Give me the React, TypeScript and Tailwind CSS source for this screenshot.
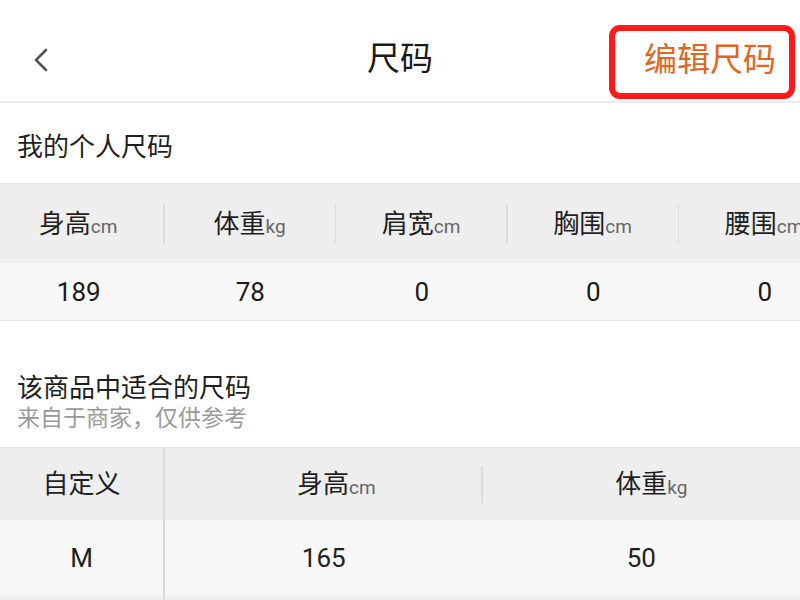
import React from "react";

const font = { fontFamily: 'Roboto, "Noto Sans CJK SC", "Noto Sans", sans-serif' };

const mine = [
  { label: "身高", unit: "cm", value: "189" },
  { label: "体重", unit: "kg", value: "78" },
  { label: "肩宽", unit: "cm", value: "0" },
  { label: "胸围", unit: "cm", value: "0" },
  { label: "腰围", unit: "cm", value: "0" },
];

export default function App() {
  return (
    <div
      className="w-[800px] h-[600px] overflow-hidden bg-white text-[#1f1f1f] font-['Roboto','Noto_Sans_CJK_SC',sans-serif]"
      style={font}
    >
      {/* Header */}
      <header className="relative h-[103px] pt-[18px] border-b-2 border-[#ececec] grid grid-cols-[1fr_auto_1fr] items-center">
        <div className="pl-[32px] flex items-center">
          <svg width="18" height="26" viewBox="0 0 18 26" fill="none">
            <polyline
              points="14,3 4,13 14,23"
              stroke="#555"
              strokeWidth="2.6"
              strokeLinecap="round"
              strokeLinejoin="round"
            />
          </svg>
        </div>
        <div className="text-[33px] leading-none text-[#1a1a1a] pb-[2px]">尺码</div>
        <div className="flex justify-end pr-[24px]">
          <span className="text-[33px] leading-none text-[#e2661e]">编辑尺码</span>
        </div>
        <div className="absolute left-[609px] top-[25px] w-[186px] h-[74px] border-[6px] border-[#ff1a1a] rounded-[11px] pointer-events-none" />
      </header>

      {/* My sizes */}
      <div className="h-[80px] flex items-center pl-[17px] pt-[8px]">
        <span className="text-[26px] leading-none text-[#1f1f1f]">我的个人尺码</span>
      </div>

      <div className="overflow-hidden border-t border-[#e8e8e8]">
        <div className="flex items-center h-[79px] bg-[#eeeeee] ml-[-7px]">
          {mine.map((c, i) => (
            <React.Fragment key={c.label}>
              <div className="w-[170px] shrink-0 flex items-baseline justify-center">
                <span className="text-[26px] leading-none text-[#1f1f1f]">{c.label}</span>
                <span className="text-[19px] leading-none text-[#666]">{c.unit}</span>
              </div>
              {i < mine.length - 1 && <div className="w-[1.5px] h-[39px] shrink-0 bg-[#dcdcdc]" />}
            </React.Fragment>
          ))}
        </div>
        <div className="flex items-center h-[58px] bg-[#f7f7f7] border-b border-[#e2e2e2] ml-[-7px]">
          {mine.map((c) => (
            <div key={c.label} className="w-[171.5px] shrink-0 text-center text-[26px] leading-none text-[#1a1a1a]">
              {c.value}
            </div>
          ))}
        </div>
      </div>

      {/* Suitable sizes */}
      <div className="pt-[51px] pb-[13px] pl-[17px]">
        <div className="text-[26px] leading-[32px] text-[#1f1f1f]">该商品中适合的尺码</div>
        <div className="text-[23px] leading-[30px] text-[#9a9a9a]">来自于商家，仅供参考</div>
      </div>

      <div className="border-t border-[#e0e0e0] flex">
        <div className="w-[165px] shrink-0 border-r-2 border-[#dadada]">
          <div className="h-[72px] bg-[#eeeeee] flex items-center justify-center text-[26px] leading-none">自定义</div>
          <div className="h-[75px] bg-[#f7f7f7] flex items-center justify-center text-[26px] leading-none">M</div>
          <div className="h-[20px] bg-[#efefef]" />
        </div>
        <div className="flex-1 flex flex-col">
          <div className="h-[72px] bg-[#eeeeee] flex items-center">
            <div className="w-[316px] flex justify-center">
              <span className="relative text-[26px] leading-none">
                身高
                <span className="absolute left-full bottom-0 text-[19px] leading-none text-[#666]">cm</span>
              </span>
            </div>
            <div className="w-[1.5px] h-[37px] bg-[#dcdcdc]" />
            <div className="flex-1 flex justify-center">
              <span className="relative text-[26px] leading-none">
                体重
                <span className="absolute left-full bottom-0 text-[19px] leading-none text-[#666]">kg</span>
              </span>
            </div>
          </div>
          <div className="h-[75px] bg-[#f7f7f7] flex items-center text-[26px] leading-none">
            <div className="w-[317.5px] text-center">165</div>
            <div className="flex-1 text-center">50</div>
          </div>
          <div className="h-[20px] bg-[#efefef]" />
        </div>
      </div>
    </div>
  );
}
